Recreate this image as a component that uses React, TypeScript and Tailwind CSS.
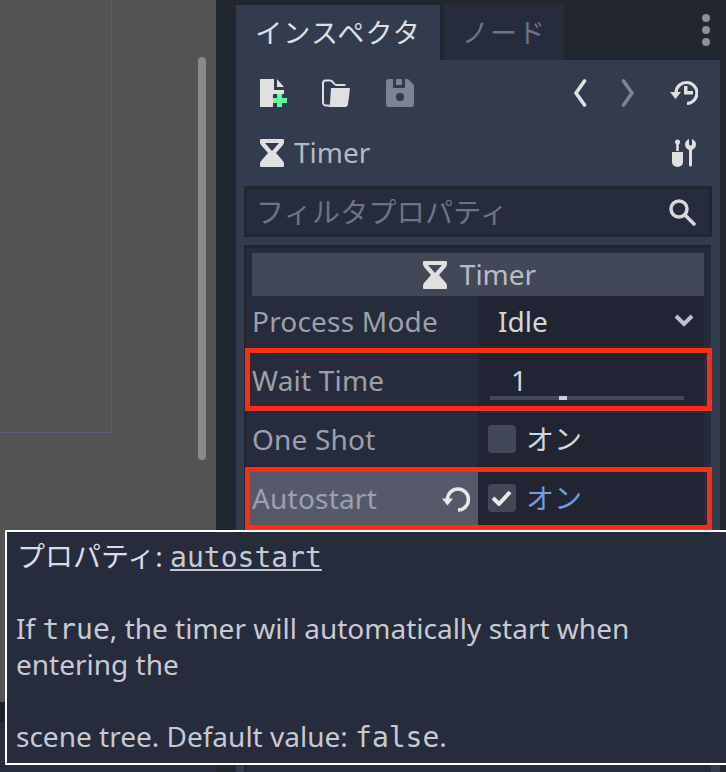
const sans = "font-['Noto_Sans','Noto_Sans_CJK_JP',sans-serif]";
const mono = "font-['DejaVu_Sans_Mono',monospace]";

function Hourglass({ className }: { className: string }) {
  return (
    <svg viewBox="0 0 24 28" className={className} fill="#e0e0e0">
      <path d="M1 0h22a1 1 0 0 1 1 1v2c0 1-.3 2-1 3l-7 8 7 8c.7 1 1 2 1 3v2a1 1 0 0 1-1 1H1a1 1 0 0 1-1-1v-2c0-1 .3-2 1-3l7-8-7-8C.3 5 0 4 0 3V1a1 1 0 0 1 1-1zm4 4l7 8 7-8z" fillRule="evenodd" />
      <path d="M12 16l8 9v1H4v-1z" />
    </svg>
  );
}

function Toolbar() {
  return (
    <div className="flex h-[66px] items-center pl-6 pr-[22px]">
      <svg viewBox="0 0 28 28" className="h-7 w-7" fill="#e0e0e0">
        <path d="M0 0H14V11H24V15H13V28H0Z" />
        <path d="M17 0L24 8H17Z" />
        <path d="M17 15h5v4h5v5h-5v4h-5v-4h-4v-5h4z" fill="#5fff97" />
      </svg>
      <svg viewBox="0 0 28 28" className="ml-[34px] h-7 w-7" fill="#e0e0e0">
        <path d="M7 26.500H4a3 3 0 0 1-3-3V4a2.500 2.500 0 0 1 2.500-2.500h5c1.500 0 2 1 3 2.500s1.500 2 3 2h9" fill="none" stroke="#e0e0e0" strokeWidth="2" />
        <path d="M9 9h18a1 1 0 0 1 1 1l-2 15c0 1.500-1 3-3 3H6c1.500-1 1.700-2 2-4z" />
      </svg>
      <svg viewBox="0 0 28 28" className="ml-9 h-7 w-7" fill="#7e8391">
        <path fillRule="evenodd" d="M3 0h4v9h12V0h3l6 6v19a3 3 0 0 1-3 3H3a3 3 0 0 1-3-3V3a3 3 0 0 1 3-3zm7 0h6v6h-6zm4 14a4 4 0 1 0 0 8 4 4 0 0 0 0-8z" />
      </svg>
      <div className="flex-1" />
      <svg viewBox="0 0 14 28" className="h-7 w-3.5" fill="none" stroke="#e0e0e0" strokeWidth="3.600" strokeLinecap="round" strokeLinejoin="round">
        <path d="M11.500 2L3 14l8.500 12" />
      </svg>
      <svg viewBox="0 0 14 28" className="ml-[34px] h-7 w-3.5" fill="none" stroke="#7e8391" strokeWidth="3.600" strokeLinecap="round" strokeLinejoin="round">
        <path d="M2.500 2L11 14 2.500 26" />
      </svg>
      <svg viewBox="0 0 28 26" className="ml-[35px] h-[26px] w-7">
        <path d="M17 23.500A10.500 10.500 0 1 0 6 12" fill="none" stroke="#e0e0e0" strokeWidth="3.200" />
        <path d="M0 12h11l-5.500 7z" fill="#e0e0e0" />
        <path d="M14 6h3.500v5H23v3.500h-9z" fill="#e0e0e0" />
      </svg>
    </div>
  );
}

function PropertyRow({ label, labelClass, right, className }: { label: string; labelClass?: string; right: React.ReactNode; className: string }) {
  return (
    <div className={`flex pr-[7px] ${className}`}>
      <div className={`flex w-[231px] items-center bg-[#262c3b] pl-[5px] pr-2 tracking-[0.2px] text-[#9da0a9] ${labelClass ?? ""}`}>{label}</div>
      <div className="relative flex w-[226px] items-center bg-[#202531]">{right}</div>
    </div>
  );
}

function CheckBox({ checked }: { checked?: boolean }) {
  return (
    <div className="ml-2.5 flex h-7 w-7 items-center justify-center rounded bg-[#434857]">
      {checked && (
        <svg viewBox="0 0 20 16" className="h-4 w-5" fill="none" stroke="#e8e8e8" strokeWidth="4">
          <path d="M1 8l6 6L18 2" />
        </svg>
      )}
    </div>
  );
}

export default function App() {
  return (
    <div className={`relative flex h-[772px] w-[726px] overflow-hidden bg-[#21262f] text-[28px] leading-9 ${sans}`}>
      {/* 2D viewport */}
      <div className="flex w-[216px] flex-col">
        <div className="relative h-[702px] bg-[#535353]">
          <div className="absolute left-0 top-0 h-[433px] w-28 border-b border-r border-[#5f5b78]" />
          <div className="absolute left-[198px] top-[57px] h-[403px] w-2 rounded-full bg-[#8a8a8a]" />
        </div>
        <div className="h-5 bg-[#1c2028]" />
        <div className="flex-1 bg-[#262c3b]" />
      </div>

      {/* Inspector dock */}
      <div className="ml-5 flex w-[484px] flex-col pt-[5px]">
        <div className="relative flex h-[55px] items-start text-[27px]">
          <div className="flex h-[55px] w-[204px] items-center justify-center bg-[#333b4f] tracking-[1.200px] text-[#dfe0e4]">インスペクタ</div>
          <div className="ml-1 flex h-[55px] w-[120px] items-center justify-center bg-[#262c3b] tracking-[1.200px] text-[#6e7482]">ノード</div>
          <div className="absolute right-[10px] top-[9px] flex flex-col gap-1">
            <div className="h-2 w-2 rounded-full bg-[#8c9099]" />
            <div className="h-2 w-2 rounded-full bg-[#8c9099]" />
            <div className="h-2 w-2 rounded-full bg-[#8c9099]" />
          </div>
        </div>

        <div className="flex-1 bg-[#333b4f]">
          <Toolbar />

          <div className="flex h-[60px] items-center pl-6 pr-6 text-[#b6b9c2]">
            <Hourglass className="mb-1.5 h-7 w-6" />
            <span className="mb-2 ml-2.5">Timer</span>
            <div className="flex-1" />
            <svg viewBox="0 0 24 28" className="mb-1.5 h-7 w-6" fill="#e0e0e0">
              <circle cx="5.500" cy="3" r="2.500" />
              <path d="M4.200 4h2.600v8H4.200z" />
              <path d="M0 13h11v10a5.500 5 0 0 1-11 0z" />
              <path d="M17 0v5a1.500 1.500 0 0 0 3 0V0c2.500 1 4 3 4 5.500 0 2.500-1.500 4.500-4 5.500v15a1.500 1.500 0 0 1-3 0V11c-2.500-1-4-3-4-5.500C13 3 14.500 1 17 0z" />
            </svg>
          </div>

          <div className="ml-2 mr-2 flex h-[51px] w-[468px] items-center justify-between border-[3px] border-[#20252f] bg-[#262c3b] pl-[9px] pr-[13px] text-[#6e7482]">
            <span className="tracking-[0.25px]">フィルタプロパティ</span>
            <svg viewBox="0 0 28 28" className="h-7 w-7" fill="none" stroke="#d6d7da" strokeWidth="3.500">
              <circle cx="11" cy="11" r="8" />
              <path d="M17 17l9 9" strokeLinecap="round" />
            </svg>
          </div>

          {/* Property list */}
          <div className="ml-2 mt-2 h-[600px] w-[467px] border-l-[3px] border-t-[3px] border-[#20252f] bg-[#262c3b] pt-[5px]">
            <div className="ml-[5px] flex h-[43px] w-[452px] items-center justify-center gap-[13px] bg-[#434857] pl-[3px] text-[#b9bcc4]">
              <Hourglass className="h-7 w-6" />
              <span className="mb-0.5">Timer</span>
            </div>
            <PropertyRow
              label="Process Mode"
              className="h-[52px] pb-0.5"
              right={
                <>
                  <span className="ml-5 text-[#d5d6da]">Idle</span>
                  <svg viewBox="0 0 20 14" className="absolute right-[10px] top-[18px] h-3.5 w-5" fill="none" stroke="#bfc1c6" strokeWidth="4">
                    <path d="M2 2l8 8 8-8" />
                  </svg>
                </>
              }
            />
            <PropertyRow
              label="Wait Time"
              className="h-[62px] pt-0.5"
              right={
                <>
                  <span className="ml-[33px] text-[#d5d6da]">1</span>
                  <div className="absolute bottom-2.5 left-3 h-1 w-[194px] bg-[#434857]">
                    <div className="ml-[69px] h-1 w-2 bg-[#cdcfd4]" />
                  </div>
                </>
              }
            />
            <PropertyRow
              label="One Shot"
              className="h-[57px]"
              right={
                <>
                  <CheckBox />
                  <span className="ml-2.5 text-[#d5d6da]">オン</span>
                </>
              }
            />
            <PropertyRow
              label="Autostart"
              className="h-[62px]"
              labelClass="!bg-[#565a68]"
              right={
                <>
                  <CheckBox checked />
                  <span className="ml-2.5 text-[#6f9fe0]">オン</span>
                </>
              }
            />
          </div>
        </div>
      </div>

      {/* Highlight frames */}
      <div className="absolute left-[245px] top-[348px] h-[63px] w-[467px] border-[5px] border-[#fb2d14]" />
      <div className="absolute left-[245px] top-[467px] h-[63px] w-[467px] border-[5px] border-[#fb2d14]" />
      <svg viewBox="0 0 28 26" className="absolute left-[442px] top-[486px] h-[26px] w-7" fill="none">
        <path d="M16 24A10.500 10.500 0 1 0 5.500 13" stroke="#e8e8e8" strokeWidth="3.500" />
        <path d="M0 12.500h11l-5.500 7z" fill="#e8e8e8" />
      </svg>

      {/* Tooltip */}
      <div className="absolute left-[5px] top-[530px] h-[235px] w-[730px] border-2 border-white bg-[#262c3b] pl-[9px] pt-1.5 text-[#c7cad3]">
        <p className="h-9 pl-px">
          <span className="text-[#dcdde1]">プロパティ:</span>{" "}
          <span className={`${mono} underline`}>autostart</span>
        </p>
        <p className="mt-9 h-9">
          If <span className={mono}>true</span>, the timer will automatically start when
        </p>
        <p className="h-9">entering the</p>
        <p className="mt-9 h-9">
          scene tree. Default value: <span className={mono}>false</span>.
        </p>
      </div>
    </div>
  );
}
